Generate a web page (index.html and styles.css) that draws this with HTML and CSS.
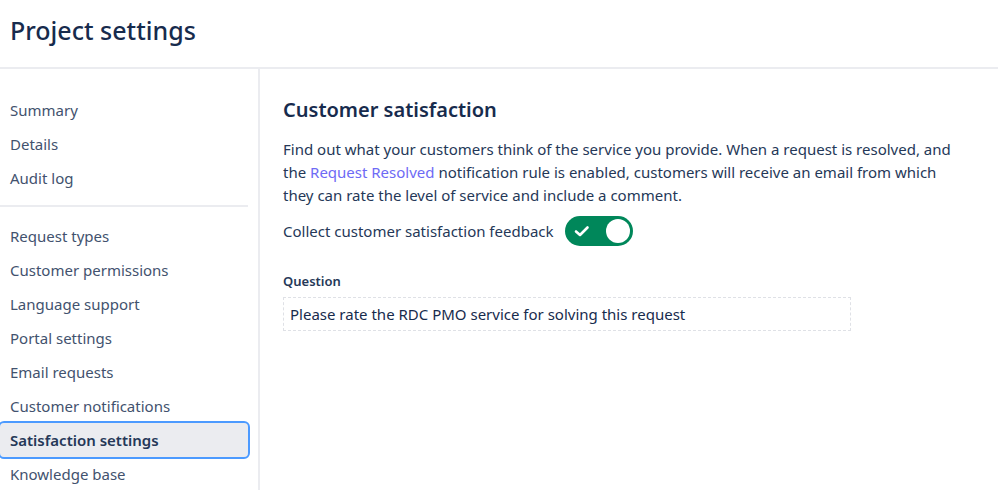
FILE: index.html
```html
<!DOCTYPE html>
<html lang="en">
<head>
  <meta charset="UTF-8">
  <title>Project settings</title>
  <link rel="stylesheet" href="styles.css">
</head>
<body>

  <div class="page-header">
    <h1>Project settings</h1>
  </div>

  <div class="layout">
    <nav class="sidebar">
      <a class="nav-item">Summary</a>
      <a class="nav-item">Details</a>
      <a class="nav-item">Audit log</a>
      <div class="nav-divider"></div>
      <a class="nav-item">Request types</a>
      <a class="nav-item">Customer permissions</a>
      <a class="nav-item">Language support</a>
      <a class="nav-item">Portal settings</a>
      <a class="nav-item">Email requests</a>
      <a class="nav-item">Customer notifications</a>
      <a class="nav-item selected">Satisfaction settings</a>
      <a class="nav-item">Knowledge base</a>
    </nav>

    <main class="content">
      <h2>Customer satisfaction</h2>
      <p class="intro">Find out what your customers think of the service you provide. When a request is resolved, and the <a href="#">Request Resolved</a> notification rule is enabled, customers will receive an email from which they can rate the level of service and include a comment.</p>

      <div class="toggle-row">
        <span>Collect customer satisfaction feedback</span>
        <span class="toggle">
          <svg class="check" width="20" height="20" viewBox="0 0 20 20">
            <path d="M4 10.5 L8 14 L15.5 6.5" fill="none" stroke="#fff" stroke-width="2.6" stroke-linecap="round" stroke-linejoin="round"/>
          </svg>
          <span class="knob"></span>
        </span>
      </div>

      <label class="field-label">Question</label>
      <div class="field">Please rate the RDC PMO service for solving this request</div>
    </main>
  </div>

</body>
</html>
```

FILE: styles.css
```css
body {
  margin: 0;
  font-family: 'Noto Sans', 'Open Sans', sans-serif;
  color: #172b4d;
  background: #fff;
}
.page-header {
  height: 67px;
  border-bottom: 2px solid #ebecf0;
  display: flex;
  align-items: center;
  padding-left: 10px;
}
.page-header h1 {
  margin: 0 0 8px;
  font-size: 25px;
  font-weight: 500;
}
.layout {
  display: flex;
  height: 421px;
  overflow: hidden;
}
.sidebar {
  width: 248px;
  padding: 24px 10px 0 0;
  border-right: 2px solid #ebecf0;
  display: flex;
  flex-direction: column;
}
.nav-item {
  flex: none;
  height: 34px;
  display: flex;
  align-items: center;
  padding-left: 10px;
  font-size: 15px;
  color: #42526e;
}
.nav-item.selected {
  background: #ebecf0;
  font-weight: 600;
  color: #253858;
  border-radius: 4px;
  outline: 2px solid #4c9aff;
  outline-offset: 0;
}
.nav-divider {
  flex: none;
  height: 2px;
  background: #ebecf0;
  margin: 10px 0 12px;
}
.content {
  padding: 26px 0 0 23px;
  flex: 1;
}
.content h2 {
  margin: 0;
  font-size: 20px;
  font-weight: 600;
  line-height: 30px;
}
.intro {
  margin: 13px 0 0;
  width: 680px;
  font-size: 15px;
  line-height: 23px;
  color: #253858;
}
.intro a {
  color: #6e6af5;
  text-decoration: none;
}
.toggle-row {
  display: flex;
  align-items: center;
  gap: 11px;
  margin-top: 9px;
  font-size: 15px;
  color: #253858;
}
.toggle {
  width: 68px;
  height: 30px;
  border-radius: 15px;
  background: #00875a;
  display: flex;
  align-items: center;
  justify-content: space-between;
  padding: 0 3px 0 7px;
  box-sizing: border-box;
}
.knob {
  width: 24px;
  height: 24px;
  border-radius: 50%;
  background: #fff;
}
.field-label {
  display: block;
  margin-top: 26px;
  font-size: 13px;
  font-weight: 600;
  color: #253858;
}
.field {
  margin-top: 7px;
  width: 568px;
  height: 34px;
  box-sizing: border-box;
  border: 1px dashed #dfe1e6;
  padding-left: 6px;
  display: flex;
  align-items: center;
  font-size: 15px;
  color: #172b4d;
}
```
